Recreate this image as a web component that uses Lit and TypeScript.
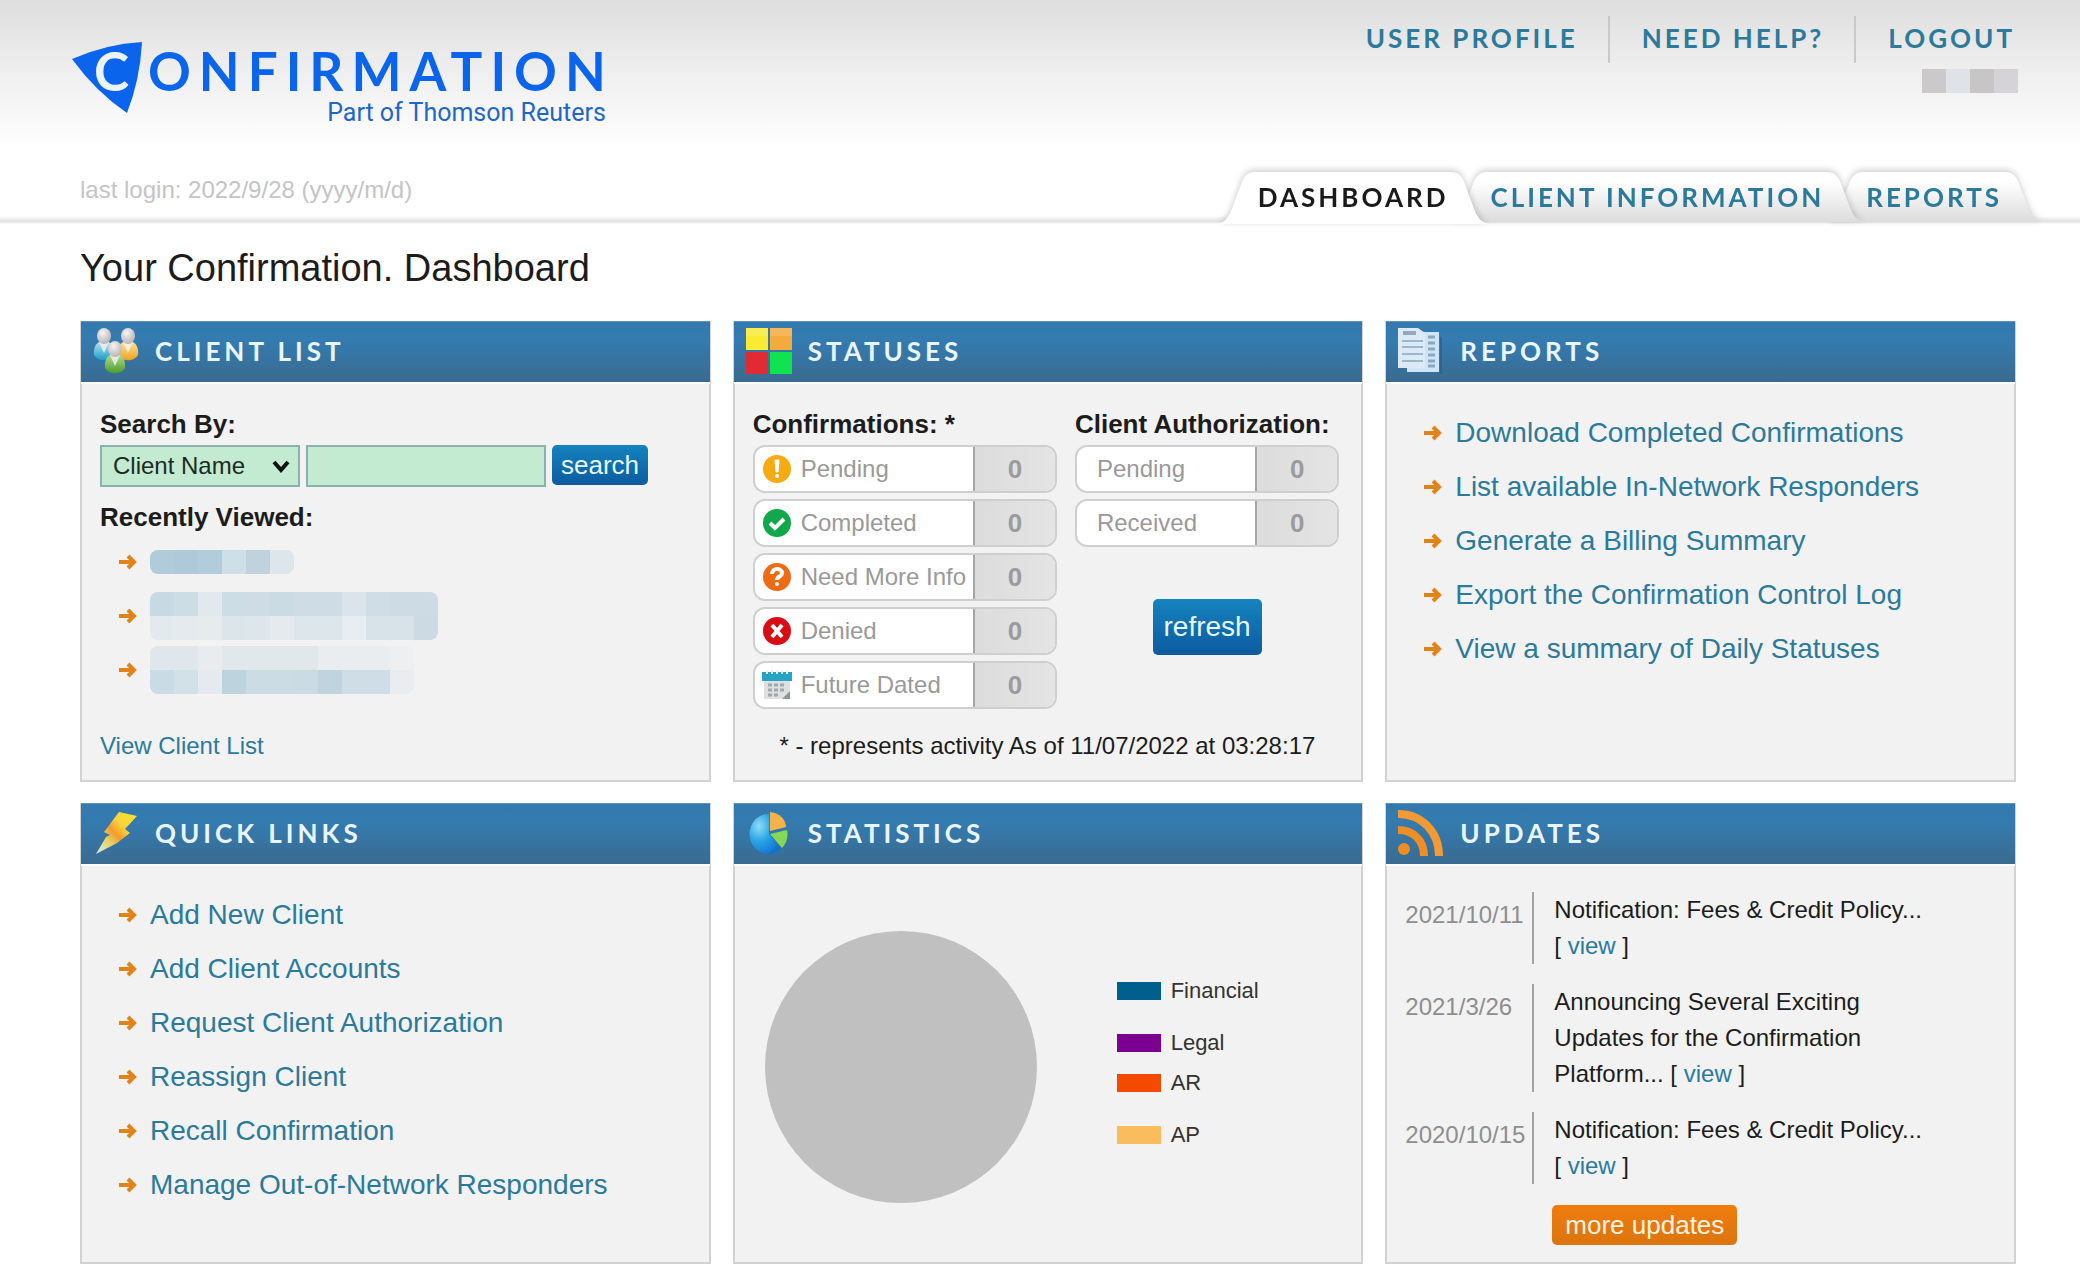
import { LitElement, html, css, svg, nothing, TemplateResult } from "lit";
import { customElement, property } from "lit/decorators.js";
import { styleMap } from "lit/directives/style-map.js";

/* ---------- data ---------- */

const NAV = ["USER PROFILE", "NEED HELP?", "LOGOUT"];
const TABS = ["DASHBOARD", "CLIENT INFORMATION", "REPORTS"];

const REPORTS = [
  "Download Completed Confirmations",
  "List available In-Network Responders",
  "Generate a Billing Summary",
  "Export the Confirmation Control Log",
  "View a summary of Daily Statuses",
];

const QUICK_LINKS = [
  "Add New Client",
  "Add Client Accounts",
  "Request Client Authorization",
  "Reassign Client",
  "Recall Confirmation",
  "Manage Out-of-Network Responders",
];

const LEGEND = [
  { label: "Financial", color: "#005f8c" },
  { label: "Legal", color: "#7b0091" },
  { label: "AR", color: "#f44a00" },
  { label: "AP", color: "#f9bc5e" },
];

const UPDATES = [
  { date: "2021/10/11", text: "Notification: Fees & Credit Policy..." },
  { date: "2021/3/26", text: "Announcing Several Exciting Updates for the Confirmation Platform..." },
  { date: "2020/10/15", text: "Notification: Fees & Credit Policy..." },
];

/* Masked names: one colour per block, one array per line of blocks. */
const MASK_USER = [["#cbc9c9", "#dfe2e6", "#c7c5c5", "#d6d3d8"]];
const MASKS = [
  [["#b0cbd9", "#aecad8", "#b1ccda", "#cfdfe8", "#bfd2de", "#dce6eb"]],
  [
    ["#c6dae3", "#cddde6", "#e2e9ee", "#cddde6", "#cddce5", "#cbdbe4", "#cddce5", "#cddce5", "#dae4ea", "#cfdde6", "#cddce4", "#cddce4"],
    ["#e3eaed", "#e4eaed", "#e6ebee", "#dce6ea", "#dde6ea", "#e4eaed", "#dde6ea", "#dde6ea", "#e8edf1", "#d8e3e9", "#d8e3e9", "#cbdae3"],
  ],
  [
    ["#dfe7ec", "#dfe7ec", "#e8ecef", "#e0e8ec", "#e1e8ec", "#e1e8ec", "#e1e8ec", "#e9edf0", "#e9edf0", "#e9edf0", "#edeff1"],
    ["#c9dce5", "#d2e0e8", "#e4eaee", "#bdd3de", "#cbdce5", "#cbdce5", "#cadbe4", "#bfd4df", "#cfdee6", "#cfdee6", "#e9edf0"],
  ],
];

/* ---------- pictures ---------- */

const arrow = html`<svg class="arrow" viewBox="0 0 18 16" width="18" height="16" aria-hidden="true">
  <path d="M0 8H14M9 2L15 8L9 14" fill="none" stroke="#e08318" stroke-width="4" />
</svg>`;

const person = (x: number, y: number, body: string) => svg`
  <path d=${`M${x - 10} ${y + 19}C${x - 11} ${y + 9} ${x - 6} ${y + 5} ${x} ${y + 5}C${x + 6} ${y + 5} ${x + 11} ${y + 9} ${x + 10} ${y + 19}C${x + 6} ${y + 26} ${x - 6} ${y + 26} ${x - 10} ${y + 19}Z`} fill=${body} />
  <path d=${`M${x - 5} ${y + 6}L${x} ${y + 17}L${x + 5} ${y + 6}Z`} fill="#f3f6f2" opacity="0.8" />
  <ellipse cx=${x} cy=${y} rx="7" ry="8" fill="url(#head)" />`;

const ICONS: Record<string, TemplateResult> = {
  people: html`<svg viewBox="0 0 46 48" width="46" height="48" aria-hidden="true">
    <defs>
      <radialGradient id="head" cx="0.4" cy="0.3" r="0.8">
        <stop offset="0" stop-color="#f6f4f4" /><stop offset="1" stop-color="#b3abaf" />
      </radialGradient>
      <linearGradient id="cyan" x2="0" y2="1"><stop offset="0" stop-color="#c6e3ec" /><stop offset="1" stop-color="#159fcd" /></linearGradient>
      <linearGradient id="gold" x2="0" y2="1"><stop offset="0" stop-color="#fbe6a0" /><stop offset="1" stop-color="#efa21d" /></linearGradient>
      <linearGradient id="leaf" x2="0" y2="1"><stop offset="0" stop-color="#b9dba0" /><stop offset="1" stop-color="#4b9c25" /></linearGradient>
    </defs>
    ${person(11, 9, "url(#cyan)")} ${person(35, 9, "url(#gold)")} ${person(22, 22, "url(#leaf)")}
  </svg>`,
  squares: html`<svg viewBox="0 0 46 46" width="46" height="46" aria-hidden="true">
    <rect x="0" y="0" width="22" height="22" fill="#faea33" /><rect x="24" y="0" width="22" height="22" fill="#f4ab3e" />
    <rect x="0" y="24" width="22" height="22" fill="#e22a35" /><rect x="24" y="24" width="22" height="22" fill="#10e34f" />
    <path d="M0 0H22V8H0Z M24 0H46V8H24Z" fill="#fff" opacity="0.15" />
  </svg>`,
  pages: html`<svg viewBox="0 0 46 46" width="46" height="46" aria-hidden="true">
    <path d="M12 46H42V8L44 10V48H14Z" fill="#2a5f88" opacity="0.7" />
    <path d="M17 4H41V44H9V38H17Z" fill="#cfe4f4" />
    <path d="M0 0H20L27 5V40H0Z" fill="#dbeaf6" />
    <path d="M5 5H18" stroke="#93a9ba" stroke-width="4" />
    <path d="M4 13H25M4 19H25M4 26H25M4 33H25" stroke="#9db6c9" stroke-width="2" />
    <path d="M30 9H37M30 15H37M30 21H37M30 27H37M30 33H37M30 38H37" stroke="#8ba7bd" stroke-width="3" />
  </svg>`,
  bolt: html`<svg viewBox="0 0 44 42" width="44" height="42" aria-hidden="true">
    <defs><linearGradient id="bolt" x1="1" y1="0" x2="0" y2="1">
      <stop offset="0" stop-color="#f7e62d" /><stop offset="0.35" stop-color="#fbd23a" /><stop offset="0.52" stop-color="#f39a2b" /><stop offset="0.7" stop-color="#e6d56a" /><stop offset="1" stop-color="#dcebf2" />
    </linearGradient></defs>
    <path d="M25 0L43 4L31 17L36 21L23 31L2 42L12 25L16 23L10 20Z" fill="url(#bolt)" />
  </svg>`,
  pie: html`<svg viewBox="0 0 40 42" width="40" height="42" aria-hidden="true">
    <defs><radialGradient id="pieBlue" cx="0.3" cy="0.3" r="0.8"><stop offset="0" stop-color="#8fdcf8" /><stop offset="0.5" stop-color="#27a4e6" /><stop offset="1" stop-color="#1271cf" /></radialGradient></defs>
    <path d="M20 2A19 20 0 1 0 32 37L20 22Z" fill="url(#pieBlue)" />
    <path d="M21 22L38 18A19 20 0 0 1 33 36Z" fill="#86d957" />
    <path d="M21 0C31 1 37 8 37 15L21 19Z" fill="#f5b14a" />
  </svg>`,
  feed: html`<svg viewBox="0 0 46 46" width="46" height="46" aria-hidden="true">
    <circle cx="6" cy="39" r="6" fill="#f08d24" />
    <path d="M0 20C15 20 26 30 26 46" fill="none" stroke="#f08d24" stroke-width="8" />
    <path d="M0 4C24 4 41 22 41 46" fill="none" stroke="#f39a37" stroke-width="8" />
  </svg>`,
  pending: html`<svg viewBox="0 0 30 30" width="30" height="30" aria-hidden="true">
    <circle cx="15" cy="15" r="14" fill="#f6ab12" /><path d="M13 6H17L16 18H14Z" fill="#fff" stroke="#fff" /><circle cx="15" cy="22" r="2" fill="#fff" />
  </svg>`,
  completed: html`<svg viewBox="0 0 30 30" width="30" height="30" aria-hidden="true">
    <circle cx="15" cy="15" r="14" fill="#10a84a" /><path d="M8 15L13 20L22 11" fill="none" stroke="#fff" stroke-width="4" />
  </svg>`,
  info: html`<svg viewBox="0 0 30 30" width="30" height="30" aria-hidden="true">
    <circle cx="15" cy="15" r="14" fill="#ee6a13" />
    <path d="M10 12C10 5 20 6 20 11C20 15 15 14 15 18" fill="none" stroke="#fff" stroke-width="4" /><circle cx="15" cy="22" r="2" fill="#fff" />
  </svg>`,
  denied: html`<svg viewBox="0 0 30 30" width="30" height="30" aria-hidden="true">
    <circle cx="15" cy="15" r="14" fill="#d90d14" /><path d="M10 9L20 21M20 9L10 21" stroke="#fff" stroke-width="4" />
  </svg>`,
  calendar: html`<svg viewBox="0 0 30 30" width="30" height="30" aria-hidden="true">
    <path d="M2 10H28V29H2Z" fill="#dde0e2" /><path d="M0 2H30V11H0Z" fill="#27a3c6" />
    <path d="M5 0V4M10 0V4M15 0V4M20 0V4M25 0V4" stroke="#e4f3f7" stroke-width="2" />
    <path d="M6 15H22M6 20H22M6 25H17" stroke="#a2a7ab" stroke-width="3" stroke-dasharray="4 2" />
    <path d="M20 29L28 21V29Z" fill="#8d949a" />
  </svg>`,
};

/* ---------- masked text ---------- */

@customElement("masked-text")
class MaskedText extends LitElement {
  @property({ attribute: false }) lines: string[][] = [];
  static styles = css`
    :host { display: block; overflow: hidden; border-radius: 8px; }
    .line { display: flex; }
    .cell { width: 24px; height: 24px; }
  `;
  render() {
    return this.lines.map(
      (line) => html`<div class="line">
        ${line.map((c) => html`<div class="cell" style=${styleMap({ background: c })}></div>`)}
      </div>`,
    );
  }
}

/* ---------- panel ---------- */

@customElement("dash-panel")
class DashPanel extends LitElement {
  @property() heading = "";
  @property() icon = "";
  static styles = css`
    :host { display: flex; flex-direction: column; background: #f2f2f2; border: 2px solid #d0d2d4; border-top: 0; box-sizing: border-box; }
    .bar { display: flex; align-items: center; height: 58px; padding-bottom: 2px; margin: 0 -1px; border-top: 1px solid #5f93b8;
      background: linear-gradient(#3379ad, #347bb0 30%, #3a6b90); box-shadow: 0 2px 0 #fafcfd; }
    .icon { display: flex; justify-content: center; width: 46px; margin: 0 16px 0 12px; }
    .title { margin: 0; font: 700 26px/32px Lato, sans-serif; letter-spacing: 4px; color: #e9f5fc; }
    .body { display: flex; flex-direction: column; flex: 1; min-height: 398px; box-sizing: border-box; }
  `;
  render() {
    return html`<div class="bar">
        <span class="icon">${ICONS[this.icon]}</span>
        <h2 class="title">${this.heading}</h2>
      </div>
      <div class="body"><slot></slot></div>`;
  }
}

/* ---------- page ---------- */

@customElement("app-root")
class AppRoot extends LitElement {
  static styles = css`
    :host { display: block; min-height: 100vh; background: #fff; color: #1c1c1c; font: 24px/36px "Liberation Sans", Arial, sans-serif; }
    a { color: #2b7a9b; text-decoration: none; }
    a:hover { text-decoration: underline; }
    ul { list-style: none; margin: 0; padding: 0; }

    .header { display: flex; justify-content: space-between; height: 224px; position: relative;
      background: linear-gradient(transparent 216px, #e2e2e2 221px, #e6e6e6 222px, #fff 224px), linear-gradient(#dedede, #ececec 60px, #fff 148px); }
    .brand { display: flex; flex-direction: column; justify-content: space-between; padding: 42px 0 16px 72px; }
    .logo { display: flex; color: #0b64ec; }
    .logo:hover { text-decoration: none; }
    .mark { font: 700 53px Lato, sans-serif; overflow: visible; }
    .words { display: flex; flex-direction: column; align-items: flex-end; padding: 1px 0 0 4px; }
    .name { font: 700 53px/56px Lato, sans-serif; letter-spacing: 8px; margin-right: -8px; }
    .part { font: 25px/28px Roboto, sans-serif; color: #1f66c9; }
    .login { margin: 0; padding-left: 8px; color: #c4c4c4; }

    .side { display: flex; flex-direction: column; align-items: flex-end; }
    .nav { display: flex; margin: 16px 35px 0 0; }
    .nav-link { padding: 0 30px 0 32px; border-left: 2px solid #c9c9c9; font: 700 26px/44px Lato, sans-serif; letter-spacing: 3px; height: 47px; }
    .nav-link:first-child { border-left: 0; }
    .user { margin: 6px 62px 0 0; border-radius: 0; }
    .tabs { display: flex; margin: auto 38px 0 0; }
    .tab { display: flex; position: relative; height: 50px; font: 700 26px/50px Lato, sans-serif; letter-spacing: 3px;
      margin-right: -38px; z-index: 1; filter: drop-shadow(0 -2px 3px rgba(0, 0, 0, 0.2)); margin-bottom: 2px; }
    .tab:nth-child(2) { z-index: 2; }
    .tab:last-child { margin-right: 0; }
    .tab.active { z-index: 3; color: #1a1a1a; margin-bottom: 0; height: 52px; }
    .cap { display: block; width: 40px; height: 100%; }
    .label { margin: 0 -1px; padding: 0 1px; background: linear-gradient(#fff 20%, #dcdcdc); z-index: 1; }
    .active .label { background: #fff; }

    .main { padding: 22px 64px 16px 80px; }
    .page-title { margin: 0 0 31px; font-size: 38px; line-height: 44px; font-weight: 400; }
    .grid { display: grid; grid-template-columns: repeat(3, 1fr); gap: 21px 22px; }

    .heading { display: block; margin: 0; font-size: 26px; line-height: 36px; font-weight: 700; }
    .search { padding: 24px 18px 0; }
    .controls { display: flex; align-items: flex-start; gap: 6px; padding-top: 3px; }
    .picker { display: grid; width: 200px; }
    .select, .input { box-sizing: border-box; height: 42px; border: 2px solid #8bb0ad; border-radius: 0; background: #c3ebd1; font: inherit; color: #1c2a24; margin: 0; }
    .select { grid-area: 1 / 1; appearance: none; padding: 0 0 0 11px; width: 100%; }
    .chevron { grid-area: 1 / 1; place-self: center end; margin-right: 10px; pointer-events: none; }
    .input { width: 240px; padding: 0 8px; }
    .button { border: 0; border-radius: 5px; background: linear-gradient(#1583bf, #0c5b9f); color: #eaf6fd; font: 26px/40px "Liberation Sans", Arial, sans-serif; padding: 0 9px; cursor: pointer; }
    .recent-title { padding-top: 12px; }
    .recent { padding: 0 37px; }
    .view-all { margin-top: auto; padding: 0 18px 16px; }

    .links { padding: 24px 20px 0 37px; }
    .row { display: flex; align-items: center; gap: 13px; height: 54px; font-size: 28px; }
    .arrow { flex: none; }

    .statuses { display: grid; grid-template-columns: 305fr 265fr; gap: 18px; padding: 24px 22px 0 18px; }
    .pills { display: flex; flex-direction: column; gap: 6px; padding-top: 3px; }
    .pill { display: flex; box-sizing: border-box; height: 48px; border: 2px solid #cfcfcf; border-radius: 12px; overflow: hidden; line-height: 44px; background: #fff; color: #999; }
    .pill-name { display: flex; align-items: center; flex: 1; gap: 9px; padding-left: 7px; white-space: nowrap; }
    .plain { padding-left: 20px; }
    .count { flex: none; width: 82px; border-left: 2px solid #a6a6a6; box-sizing: border-box; background: linear-gradient(90deg, #dcdcdc, #e4e4e4); text-align: center; font-size: 26px; font-weight: 700; color: #9b9b9b; }
    .refresh { display: flex; justify-content: center; padding-top: 52px; }
    .refresh .button { font-size: 28px; line-height: 56px; padding: 0 11px; }
    .note { margin: auto 0 0; padding: 0 46px 16px 0; text-align: right; }

    .stats { display: flex; align-items: center; flex: 1; padding: 8px 30px 0; gap: 80px; }
    .legend { padding-bottom: 8px; }
    .legend-item { display: flex; align-items: center; gap: 10px; font-size: 22px; line-height: 40px; color: #333; }
    .legend-item:nth-child(odd) { margin-bottom: 12px; }
    .swatch { width: 44px; height: 18px; }

    .updates { display: flex; flex-direction: column; gap: 20px; padding: 28px 18px 0; }
    .update { display: grid; grid-template-columns: 127px minmax(0, 404px); }
    .date { padding-top: 5px; color: #8e8e8e; }
    .news { border-left: 2px solid #a3a3a3; padding-left: 20px; }
    .view { white-space: nowrap; }
    .more { padding: 21px 0 0 165px; }
    .more .button { background: linear-gradient(#f07c0c, #db750f); color: #fff3e2; padding: 0 13px; }
  `;

  private tab(label: string, i: number) {
    const active = i === 0;
    const fill = active ? "#fff" : `url(#tabFill)`;
    const defs = active ? nothing : svg`<defs><linearGradient id="tabFill" x2="0" y2="54" gradientUnits="userSpaceOnUse">
      <stop offset="0.2" stop-color="#fff" /><stop offset="1" stop-color="#dcdcdc" /></linearGradient></defs>`;
    return html`<a class="tab ${active ? "active" : ""}" href="#">
      <svg class="cap" viewBox="0 0 40 54" preserveAspectRatio="none" aria-hidden="true">${defs}
        <path d="M0 54C8 52 11 46 14 38L24 10C27 3 30 0 37 0H40V54Z" fill=${fill} /></svg>
      <span class="label">${label}</span>
      <svg class="cap" viewBox="0 0 40 54" preserveAspectRatio="none" aria-hidden="true">${defs}
        <path d="M40 54C32 52 29 46 26 38L16 10C13 3 10 0 3 0H0V54Z" fill=${fill} /></svg>
    </a>`;
  }

  private links(items: string[]) {
    return html`<ul class="links">
      ${items.map((t) => html`<li class="row">${arrow}<a href="#">${t}</a></li>`)}
    </ul>`;
  }

  private pill(name: string, icon?: string) {
    return html`<li class="pill">
      <span class="pill-name ${icon ? "" : "plain"}">${icon ? ICONS[icon] : nothing}${name}</span>
      <span class="count">0</span>
    </li>`;
  }

  render() {
    return html`
      <header class="header">
        <div class="brand">
          <a class="logo" href="#" aria-label="Confirmation, Part of Thomson Reuters">
            <svg class="mark" viewBox="0 0 72 72" width="72" height="72" aria-hidden="true">
              <path d="M0 17Q34 2 70 0Q68 38 55 71Q24 50 0 17Z" fill="#0b64ec" />
              <text x="22" y="49" fill="#edf3fb">C</text>
            </svg>
            <span class="words"><span class="name">ONFIRMATION</span><span class="part">Part of Thomson Reuters</span></span>
          </a>
          <p class="login">last login: 2022/9/28 (yyyy/m/d)</p>
        </div>
        <div class="side">
          <nav class="nav">${NAV.map((n) => html`<a class="nav-link" href="#">${n}</a>`)}</nav>
          <masked-text class="user" .lines=${MASK_USER}></masked-text>
          <nav class="tabs">${TABS.map((t, i) => this.tab(t, i))}</nav>
        </div>
      </header>

      <main class="main">
        <h1 class="page-title">Your Confirmation. Dashboard</h1>
        <div class="grid">
          <dash-panel heading="CLIENT LIST" icon="people">
            <form class="search" @submit=${(e: Event) => e.preventDefault()}>
              <label class="heading" for="field">Search By:</label>
              <div class="controls">
                <span class="picker">
                  <select class="select" id="field"><option>Client Name</option></select>
                  <svg class="chevron" viewBox="0 0 18 13" width="18" height="13" aria-hidden="true"><path d="M2 2L9 10L16 2" fill="none" stroke="#111" stroke-width="4" /></svg>
                </span>
                <input class="input" type="text" aria-label="Search text" />
                <button class="button" type="submit">search</button>
              </div>
              <h3 class="heading recent-title">Recently Viewed:</h3>
            </form>
            <ul class="recent">
              ${MASKS.map((m) => html`<li class="row">${arrow}<masked-text .lines=${m}></masked-text></li>`)}
            </ul>
            <div class="view-all"><a href="#">View Client List</a></div>
          </dash-panel>

          <dash-panel heading="STATUSES" icon="squares">
            <div class="statuses">
              <div>
                <h3 class="heading">Confirmations: *</h3>
                <ul class="pills">
                  ${this.pill("Pending", "pending")} ${this.pill("Completed", "completed")}
                  ${this.pill("Need More Info", "info")} ${this.pill("Denied", "denied")}
                  ${this.pill("Future Dated", "calendar")}
                </ul>
              </div>
              <div>
                <h3 class="heading">Client Authorization:</h3>
                <ul class="pills">${this.pill("Pending")} ${this.pill("Received")}</ul>
                <div class="refresh"><button class="button" type="button">refresh</button></div>
              </div>
            </div>
            <p class="note">* - represents activity As of 11/07/2022 at 03:28:17</p>
          </dash-panel>

          <dash-panel heading="REPORTS" icon="pages">${this.links(REPORTS)}</dash-panel>
          <dash-panel heading="QUICK LINKS" icon="bolt">${this.links(QUICK_LINKS)}</dash-panel>

          <dash-panel heading="STATISTICS" icon="pie">
            <div class="stats">
              <svg viewBox="0 0 272 272" width="272" height="272" role="img" aria-label="Statistics chart"><circle cx="136" cy="136" r="136" fill="#c0c0c0" /></svg>
              <ul class="legend">
                ${LEGEND.map((l) => html`<li class="legend-item"><span class="swatch" style=${styleMap({ background: l.color })}></span>${l.label}</li>`)}
              </ul>
            </div>
          </dash-panel>

          <dash-panel heading="UPDATES" icon="feed">
            <div class="updates">
              ${UPDATES.map(
                (u) => html`<div class="update">
                  <span class="date">${u.date}</span>
                  <div class="news">${u.text} <span class="view">[ <a href="#">view</a> ]</span></div>
                </div>`,
              )}
            </div>
            <div class="more"><button class="button" type="button">more updates</button></div>
          </dash-panel>
        </div>
      </main>
    `;
  }
}
